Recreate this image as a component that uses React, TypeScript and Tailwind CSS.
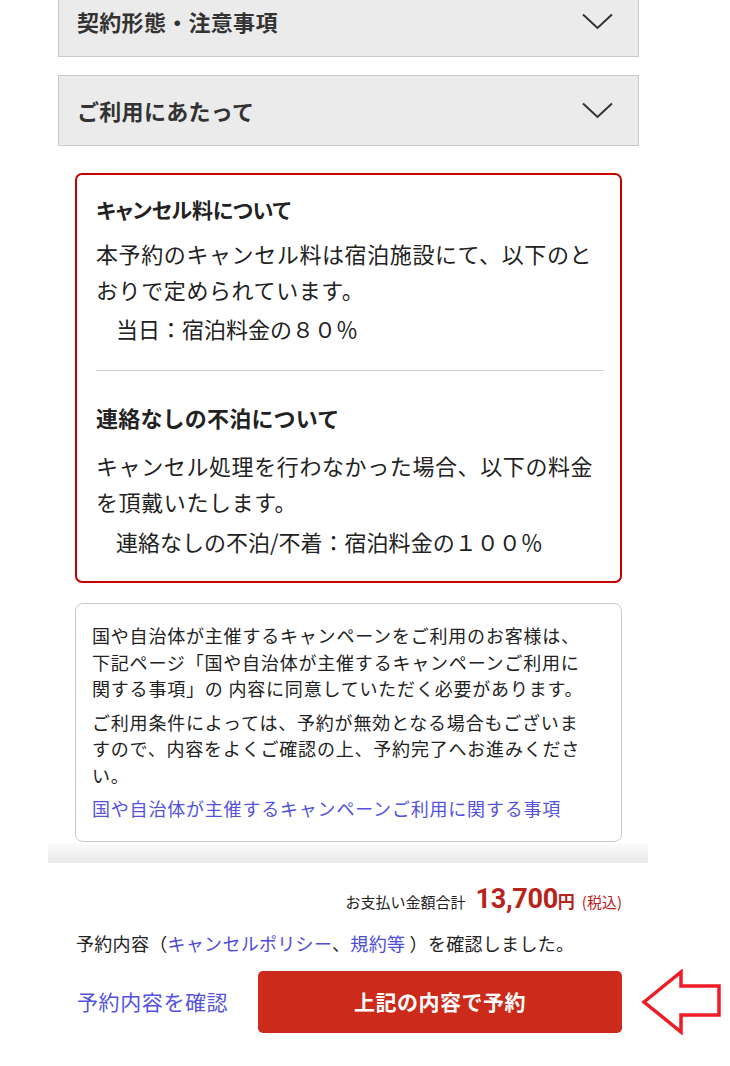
const jp = "font-['Noto_Sans_CJK_JP','Noto_Sans',sans-serif]"

function Chevron() {
  return (
    <svg width="31" height="17" viewBox="0 0 31 17" fill="none">
      <polyline points="1,1.5 15.5,15 30,1.5" stroke="#333" strokeWidth="2" strokeLinejoin="miter" />
    </svg>
  )
}

function AccordionRow({ title }: { title: string }) {
  return (
    <div className="flex h-[71px] w-[581px] items-center justify-between border border-[#c9c9c9] bg-[#ebebeb] pl-[18px] pr-[25px]">
      <span className="text-[22px] font-bold tracking-[0.3px] text-[#333]">{title}</span>
      <Chevron />
    </div>
  )
}

export default function App() {
  return (
    <div className={`${jp} relative min-h-[1066px] w-[730px] overflow-hidden bg-white text-[#222]`}>
      <div className="relative ml-[48px] w-[600px]">
        {/* header shadow */}
        <div className="pointer-events-none absolute inset-x-0 top-0 z-10 h-[10px] bg-gradient-to-b from-[#f0f0f0] to-transparent" />

        {/* accordions */}
        <div className="-mt-[14px] ml-[10px] flex flex-col gap-[18px]">
          <AccordionRow title="契約形態・注意事項" />
          <AccordionRow title="ご利用にあたって" />
        </div>

        {/* cancel policy */}
        <div className="ml-[27px] mt-[27px] w-[547px] rounded-[7px] border-2 border-[#c80000] pb-[22px] pl-[19px] pr-[16px] pt-[18px]">
          <div className="text-[21px] font-bold leading-[32px] tracking-[-0.2px] text-[#222] [font-feature-settings:'palt']">
            キャンセル料について
          </div>
          <p className="mt-[10px] text-[22px] leading-[36px] tracking-[0.6px]">
            本予約のキャンセル料は宿泊施設にて、以下のとおりで定められています。
          </p>
          <p className="mt-[3px] pl-[20px] text-[22px] leading-[36px]">当日：宿泊料金の８０％</p>

          <div className="mt-[24px] h-px bg-[#cfcfcf]" />

          <div className="mt-[30px] text-[22px] font-bold leading-[32px] tracking-[0.2px] text-[#222]">
            連絡なしの不泊について
          </div>
          <p className="mt-[14px] text-[22px] leading-[36px] tracking-[0.6px]">
            キャンセル処理を行わなかった場合、以下の料金を頂戴いたします。
          </p>
          <p className="mt-[4px] pl-[20px] text-[22px] leading-[36px]">
            連絡なしの不泊/不着：宿泊料金の１００％
          </p>
        </div>

        {/* campaign notice */}
        <div className="ml-[27px] mt-[20px] w-[547px] rounded-[8px] border border-[#cbcbcb] pb-[19px] pl-[16px] pt-[18px] text-[18px] leading-[26.5px] tracking-[0.8px]">
          <div className="w-[500px]">
            <p>
              国や自治体が主催するキャンペーンをご利用のお客様は、下記ページ「国や自治体が主催するキャンペーンご利用に関する事項」の
              内容に同意していただく必要があります。
            </p>
            <p className="mt-[7px]">
              ご利用条件によっては、予約が無効となる場合もございますので、内容をよくご確認の上、予約完了へお進みください。
            </p>
            <p className="mt-[7px] text-[#5353dd]">国や自治体が主催するキャンペーンご利用に関する事項</p>
          </div>
        </div>

        {/* bottom shade */}
        <div className="mt-[2px] h-[19px] bg-gradient-to-b from-[#fafafa] to-[#e9e9e9]" />
      </div>

      {/* footer */}
      <div className="pb-[30px] pt-[20px]">
        <div className="flex items-baseline justify-end pr-[108px]">
          <span className="text-[15px] text-[#222]">お支払い金額合計</span>
          <span className="ml-[10px] font-['Roboto',sans-serif] text-[27px] font-bold leading-[32px] tracking-[-0.3px] text-[#b8231b]">
            13,700
          </span>
          <span className="text-[17px] font-bold text-[#b8231b]">円</span>
          <span className="ml-[7px] text-[15px] text-[#b8231b]">(税込)</span>
        </div>

        <p className="ml-[76px] mt-[14px] text-[18px] leading-[28px] tracking-[0.3px]">
          予約内容（<span className="text-[#4d4ddb]">キャンセルポリシー</span>、
          <span className="text-[#4d4ddb]">規約等</span> ）を確認しました。
        </p>

        <div className="mt-[12px] flex items-center">
          <span className="ml-[77px] w-[181px] text-[21px] tracking-[0.6px] text-[#5353dd]">予約内容を確認</span>
          <button className="flex h-[62px] w-[364px] items-center justify-center rounded-[5px] bg-[#cc2a1a] text-[21px] font-bold tracking-[0.5px] text-white">
            上記の内容で予約
          </button>
          <svg className="ml-[19px]" width="82" height="66" viewBox="0 0 82 66" fill="none">
            <polygon
              points="3,33 40,3 40,17 78,17 78,46 40,46 40,63"
              stroke="#ee1c25"
              strokeWidth="3.5"
              strokeLinejoin="miter"
            />
          </svg>
        </div>
      </div>
    </div>
  )
}
